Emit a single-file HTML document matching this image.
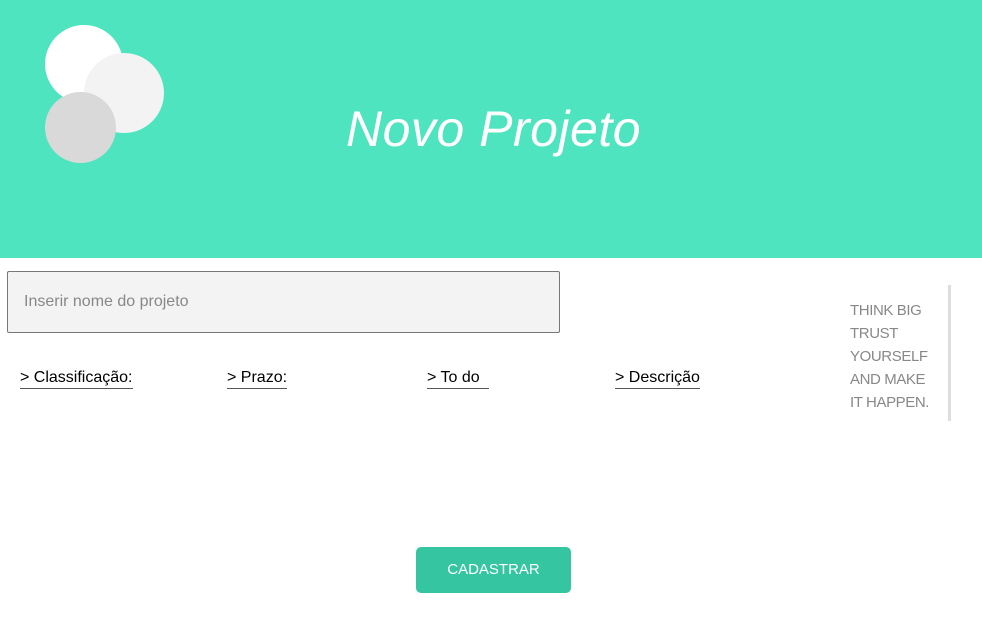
<!DOCTYPE html>
<html><head><meta charset="utf-8"><style>
body{margin:0;width:982px;height:631px;position:relative;background:#fff;font-family:"Liberation Sans",sans-serif;overflow:hidden}
.hdr{position:absolute;left:0;top:0;width:982px;height:258px;background:#4de4bf}
.c{position:absolute;border-radius:50%}
h1{position:absolute;left:346px;top:100px;margin:0;font-size:50px;font-style:italic;font-weight:normal;color:#fff;letter-spacing:0.5px}
.inp{position:absolute;left:7px;top:271px;width:553px;height:62px;background:#f3f3f3;border:1px solid #777;border-radius:2px;box-sizing:border-box}
.inp span{position:absolute;left:16px;top:21px;font-size:16px;color:#888}
.lbl{position:absolute;top:369px;font-size:16px;color:#000;border-bottom:1px solid #555;padding-bottom:1px}
.q{position:absolute;left:850px;top:299px;font-size:15px;line-height:23px;color:#888;letter-spacing:-0.4px}
.bar{position:absolute;left:948px;top:285px;width:3px;height:136px;background:#ddd}
.btn{position:absolute;left:416px;top:547px;width:155px;height:46px;background:#35c6a1;border-radius:5px;color:#fff;font-size:15px;text-align:center;line-height:46px}
</style></head><body>
<div class="hdr">
<div class="c" style="left:45px;top:25px;width:78px;height:78px;background:#fff"></div>
<div class="c" style="left:84px;top:53px;width:80px;height:80px;background:#f3f3f3"></div>
<div class="c" style="left:45px;top:92px;width:71px;height:71px;background:#d9d9d9"></div>
<h1>Novo Projeto</h1>
</div>
<div class="inp"><span>Inserir nome do projeto</span></div>
<div class="lbl" style="left:20px">&gt; Classificação:</div>
<div class="lbl" style="left:227px">&gt; Prazo:</div>
<div class="lbl" style="left:427px">&gt; To do&nbsp;&nbsp;</div>
<div class="lbl" style="left:615px">&gt; Descrição</div>
<div class="q">THINK BIG<br>TRUST<br>YOURSELF<br>AND MAKE<br>IT HAPPEN.</div>
<div class="bar"></div>
<div class="btn">CADASTRAR</div>
</body></html>
